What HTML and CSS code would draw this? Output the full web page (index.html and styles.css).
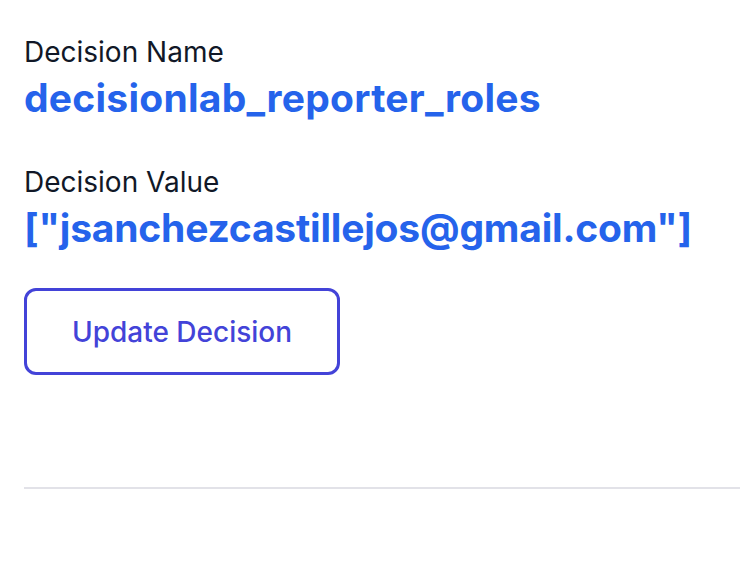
FILE: index.html
```html
<!DOCTYPE html>
<html>
<head>
<meta charset="utf-8">
<link rel="stylesheet" href="styles.css">
</head>
<body>
<main class="panel">
  <section class="field">
    <div class="label">Decision Name</div>
    <div class="value value-name">decisionlab_reporter_roles</div>
  </section>
  <section class="field">
    <div class="label">Decision Value</div>
    <div class="value value-json">["jsanchezcastillejos@gmail.com"]</div>
  </section>
  <button class="btn">Update Decision</button>
  <hr class="divider">
</main>
</body>
</html>
```

FILE: styles.css
```css
html, body {
  margin: 0;
  padding: 0;
  background: #ffffff;
}
body {
  font-family: Inter, "Noto Sans", sans-serif;
}
.panel {
  padding: 36px 0 0 24px;
  display: flex;
  flex-direction: column;
  align-items: flex-start;
}
.field {
  display: flex;
  flex-direction: column;
  gap: 6px;
  margin-bottom: 44px;
}
.field + .field {
  margin-bottom: 36px;
}
.label {
  font-size: 28px;
  line-height: 32px;
  color: #111827;
  font-weight: 400;
}
.value {
  font-size: 39px;
  line-height: 48px;
  font-weight: 700;
  color: #2563eb;
  white-space: nowrap;
}
.value-name {
  letter-spacing: 0.25px;
}
.value-json {
  letter-spacing: -0.2px;
}
.btn {
  width: 316px;
  height: 87px;
  border: 3px solid #4343d8;
  border-radius: 12px;
  background: #fff;
  color: #4343d8;
  font-family: Inter, "Noto Sans", sans-serif;
  font-size: 28px;
  font-weight: 500;
  padding: 0;
}
.divider {
  align-self: stretch;
  margin: 112px 0 0 0;
  border: 0;
  height: 2px;
  background: #e2e2e8;
}
```
